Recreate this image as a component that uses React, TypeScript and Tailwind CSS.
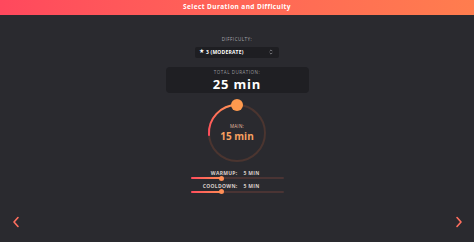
import React from "react";

function Slider({ label, value }: { label: string; value: string }) {
  return (
    <div className="flex flex-col items-center w-[93px]">
      <div className="flex w-full text-[5px] font-bold tracking-[0.3px] text-[#d9cfcb] leading-[6px]">
        <span className="w-[47px] text-right">{label}</span>
        <span className="ml-[6px]">{value}</span>
      </div>
      <div className="relative w-full h-[2px] mt-[1.5px] rounded-full bg-[#4a3434]">
        <div className="h-full w-[31px] rounded-full bg-gradient-to-r from-[#ff4b5c] to-[#ff8a55]" />
        <div className="absolute left-[28px] top-[-1.5px] w-[5px] h-[5px] rounded-full bg-[#ff8f57]" />
      </div>
    </div>
  );
}

export default function App() {
  return (
    <div
      className="w-[474px] h-[242px] flex flex-col bg-[#2a2a2f] overflow-hidden"
      style={{ fontFamily: '"Open Sans", "Noto Sans", sans-serif' }}
    >
      <div className="h-[15px] shrink-0 flex items-center justify-center bg-gradient-to-r from-[#ff485d] to-[#ff7d4e]">
        <span className="text-[6.5px] font-bold tracking-[0.4px] text-white leading-none">
          Select Duration and Difficulty
        </span>
      </div>

      <div className="flex flex-col items-center pt-[22px]">
        <div className="text-[4.5px] tracking-[0.5px] text-[#a9a9ae] leading-none">DIFFICULTY:</div>
        <div className="mt-[5px] w-[84px] h-[11px] rounded-[2px] bg-[#1e1e22] flex items-center pl-[4px] pr-[6px]">
          <span className="text-[5.5px] text-white leading-none">★</span>
          <span className="ml-[2px] text-[5px] font-bold tracking-[0.2px] text-white leading-none">3 (MODERATE)</span>
          <svg className="ml-auto" width="4" height="6" viewBox="0 0 4 6" fill="none" stroke="#8a8a8f" strokeWidth="0.8">
            <path d="M0.7 2.2 L2 0.9 L3.3 2.2" />
            <path d="M0.7 3.8 L2 5.1 L3.3 3.8" />
          </svg>
        </div>

        <div className="mt-[9px] w-[143px] h-[26px] rounded-[4px] bg-[#1f1f23] flex flex-col items-center pt-[3px]">
          <div className="text-[4.5px] tracking-[0.5px] text-[#9a9a9f] leading-[5px]">TOTAL DURATION:</div>
          <div className="mt-[2px] text-[13px] font-bold tracking-[0.8px] text-white leading-[14px]">25 min</div>
        </div>

        <div className="relative mt-[5px] w-[72px] h-[68px]">
          <svg className="absolute inset-0" width="72" height="68" viewBox="0 0 72 68">
            <defs>
              <linearGradient id="arcg" x1="0" y1="1" x2="1" y2="0">
                <stop offset="0" stopColor="#ff4b5c" />
                <stop offset="1" stopColor="#ff9a55" />
              </linearGradient>
            </defs>
            <circle cx="36" cy="35" r="28" fill="none" stroke="#4b3530" strokeWidth="2" />
            <path d="M8 37 A 28 28 0 0 1 36 7" fill="none" stroke="url(#arcg)" strokeWidth="2" strokeLinecap="round" />
            <circle cx="36" cy="7" r="6" fill="#ff9a4e" />
          </svg>
          <div className="absolute inset-0 flex flex-col items-center justify-center pt-[2px]">
            <div className="text-[4.5px] tracking-[0.3px] text-[#e8bda0] leading-none">MAIN:</div>
            <div className="mt-[2px] text-[10px] font-bold text-[#f7a060] leading-none">15 min</div>
          </div>
        </div>

        <div className="mt-[4px] flex flex-col items-center gap-[4px]">
          <Slider label="WARMUP:" value="5 MIN" />
          <Slider label="COOLDOWN:" value="5 MIN" />
        </div>
      </div>

      <div className="flex justify-between pl-[12px] pr-[11px] mt-[23px]">
        <svg width="8" height="12" viewBox="0 0 8 12" fill="none" stroke="#ff6f5f" strokeWidth="1.6" strokeLinecap="round" strokeLinejoin="round">
          <path d="M6 1.5 L2 6 L6 10.5" />
        </svg>
        <svg width="8" height="12" viewBox="0 0 8 12" fill="none" stroke="#ff6f5f" strokeWidth="1.6" strokeLinecap="round" strokeLinejoin="round">
          <path d="M2 1.5 L6 6 L2 10.5" />
        </svg>
      </div>
    </div>
  );
}
